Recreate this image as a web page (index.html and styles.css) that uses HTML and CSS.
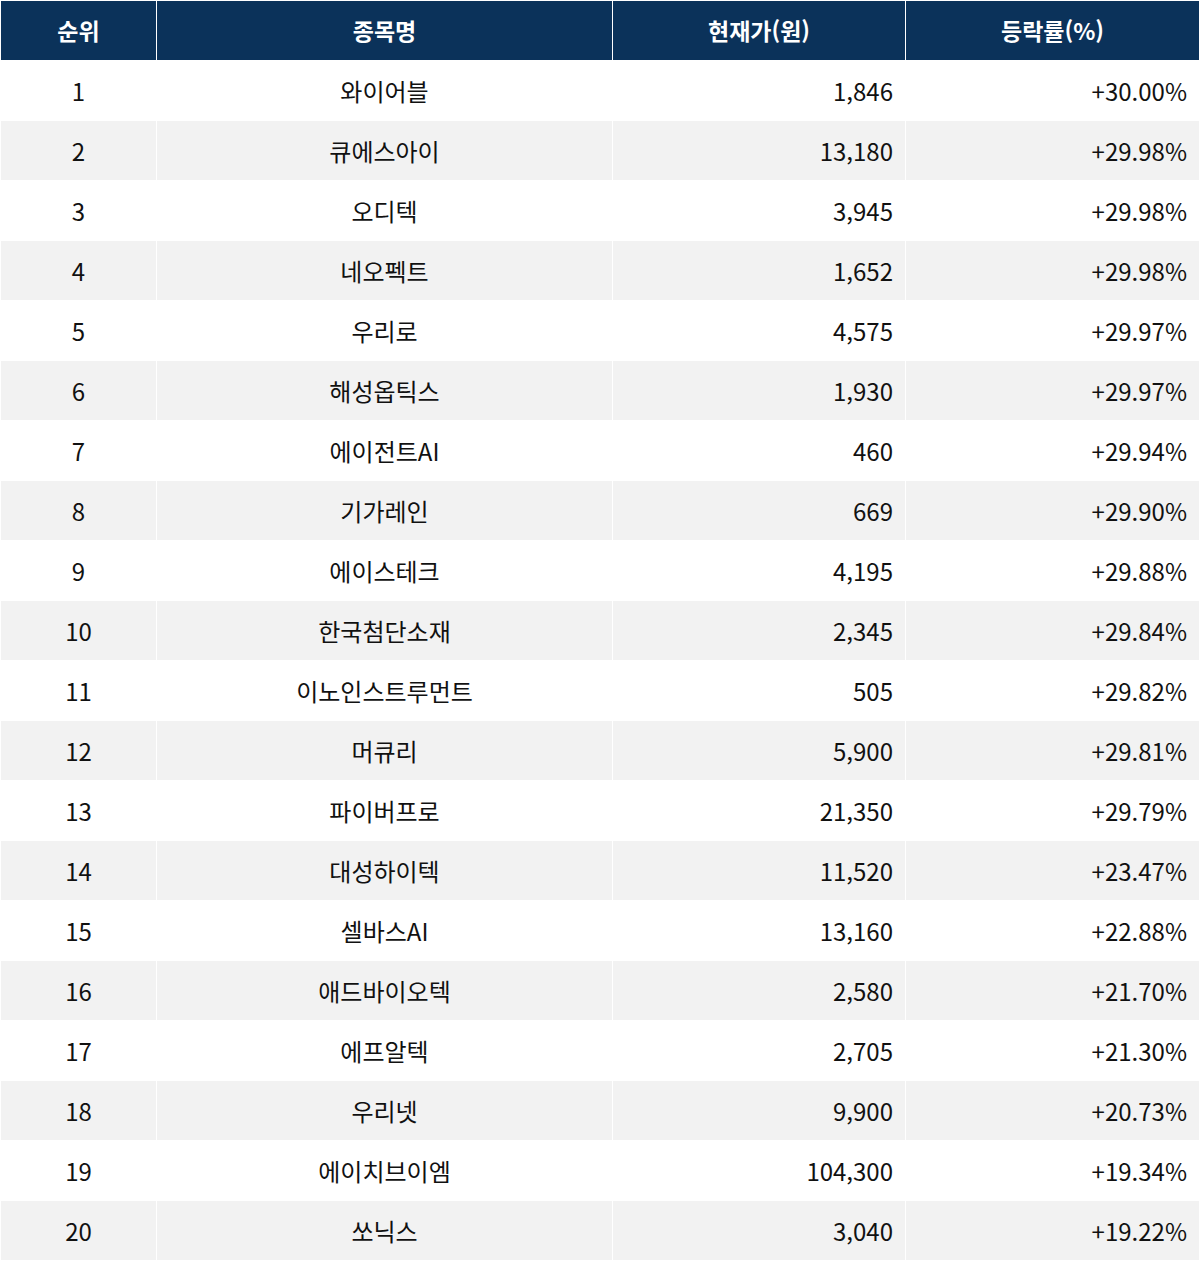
FILE: index.html
```html
<!DOCTYPE html>
<html lang="ko">
<head>
<meta charset="utf-8">
<title>등락률 상위</title>
<link rel="stylesheet" href="styles.css">
</head>
<body>
<table class="rank-table">
  <colgroup>
    <col class="c-rank">
    <col class="c-name">
    <col class="c-price">
    <col class="c-rate">
  </colgroup>
  <thead>
    <tr><th>순위</th><th>종목명</th><th>현재가(원)</th><th>등락률(%)</th></tr>
  </thead>
  <tbody>
    <tr><td class="rank">1</td><td class="name">와이어블</td><td class="num">1,846</td><td class="num">+30.00%</td></tr>
    <tr><td class="rank">2</td><td class="name">큐에스아이</td><td class="num">13,180</td><td class="num">+29.98%</td></tr>
    <tr><td class="rank">3</td><td class="name">오디텍</td><td class="num">3,945</td><td class="num">+29.98%</td></tr>
    <tr><td class="rank">4</td><td class="name">네오펙트</td><td class="num">1,652</td><td class="num">+29.98%</td></tr>
    <tr><td class="rank">5</td><td class="name">우리로</td><td class="num">4,575</td><td class="num">+29.97%</td></tr>
    <tr><td class="rank">6</td><td class="name">해성옵틱스</td><td class="num">1,930</td><td class="num">+29.97%</td></tr>
    <tr><td class="rank">7</td><td class="name">에이전트AI</td><td class="num">460</td><td class="num">+29.94%</td></tr>
    <tr><td class="rank">8</td><td class="name">기가레인</td><td class="num">669</td><td class="num">+29.90%</td></tr>
    <tr><td class="rank">9</td><td class="name">에이스테크</td><td class="num">4,195</td><td class="num">+29.88%</td></tr>
    <tr><td class="rank">10</td><td class="name">한국첨단소재</td><td class="num">2,345</td><td class="num">+29.84%</td></tr>
    <tr><td class="rank">11</td><td class="name">이노인스트루먼트</td><td class="num">505</td><td class="num">+29.82%</td></tr>
    <tr><td class="rank">12</td><td class="name">머큐리</td><td class="num">5,900</td><td class="num">+29.81%</td></tr>
    <tr><td class="rank">13</td><td class="name">파이버프로</td><td class="num">21,350</td><td class="num">+29.79%</td></tr>
    <tr><td class="rank">14</td><td class="name">대성하이텍</td><td class="num">11,520</td><td class="num">+23.47%</td></tr>
    <tr><td class="rank">15</td><td class="name">셀바스AI</td><td class="num">13,160</td><td class="num">+22.88%</td></tr>
    <tr><td class="rank">16</td><td class="name">애드바이오텍</td><td class="num">2,580</td><td class="num">+21.70%</td></tr>
    <tr><td class="rank">17</td><td class="name">에프알텍</td><td class="num">2,705</td><td class="num">+21.30%</td></tr>
    <tr><td class="rank">18</td><td class="name">우리넷</td><td class="num">9,900</td><td class="num">+20.73%</td></tr>
    <tr><td class="rank">19</td><td class="name">에이치브이엠</td><td class="num">104,300</td><td class="num">+19.34%</td></tr>
    <tr><td class="rank">20</td><td class="name">쏘닉스</td><td class="num">3,040</td><td class="num">+19.22%</td></tr>
  </tbody>
</table>
</body>
</html>
```

FILE: styles.css
```css
html, body {
  margin: 0;
  padding: 0;
  background: #ffffff;
}

.rank-table {
  width: 1200px;
  border-collapse: separate;
  border-spacing: 1px;
  table-layout: fixed;
  font-family: "Noto Sans CJK KR", "Noto Sans", sans-serif;
  font-size: 24px;
  color: #111111;
}

.c-rank { width: 155px; }
.c-name { width: 455px; }
.c-price { width: 292px; }
.c-rate { width: 293px; }

.rank-table th,
.rank-table td {
  height: 59px;
  padding: 1px 12px 0;
  box-sizing: border-box;
  vertical-align: middle;
  line-height: 1;
}

.rank-table th {
  background: #0b325a;
  color: #ffffff;
  font-size: 23px;
  font-weight: 700;
  text-align: center;
  padding-top: 0;
}

.rank-table td {
  background: #ffffff;
  font-weight: 400;
}

.rank-table tbody tr:nth-child(even) td {
  background: #f2f2f2;
}

.rank-table td.rank,
.rank-table td.name {
  text-align: center;
}

.rank-table td.num {
  text-align: right;
}
```
